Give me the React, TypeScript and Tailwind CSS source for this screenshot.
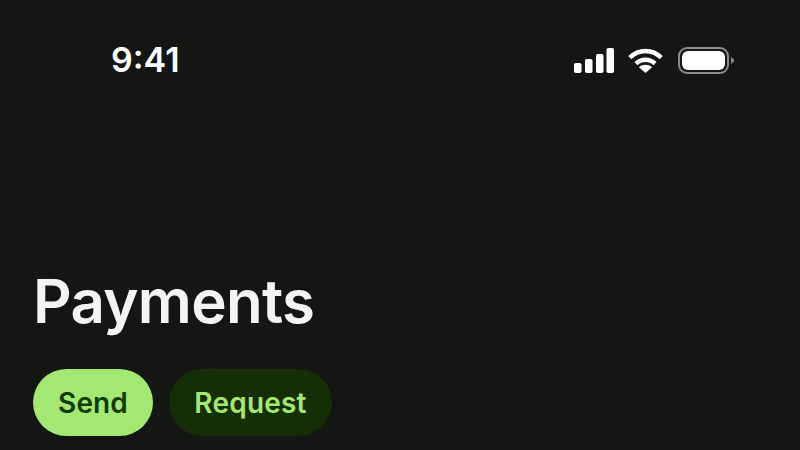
const inter = { fontFamily: "Inter, 'Noto Sans', sans-serif" };

function StatusIcons() {
  return (
    <div className="flex items-center">
      <svg width="40" height="25" viewBox="0 0 40 25" fill="#fff">
        <rect x="0" y="15" width="7.5" height="10" rx="1.8" />
        <rect x="11" y="11" width="7.5" height="14" rx="1.8" />
        <rect x="22" y="6" width="7.5" height="19" rx="1.8" />
        <rect x="32.5" y="0" width="7.5" height="25" rx="1.8" />
      </svg>
      <svg className="ml-[14px]" width="35" height="25" viewBox="0 0 35 25" fill="none" stroke="#fff" strokeWidth="4.4">
        <path d="M1.8 9.6C10.5 .7 24.5 .7 33.2 9.6" />
        <path d="M8 15.6C13.3 10.4 21.7 10.4 27 15.6" />
        <path d="M17.5 25L10.9 19.2C14.7 16 20.3 16 24.1 19.2Z" fill="#fff" stroke="none" />
      </svg>
      <div className="ml-[15px] flex h-[27px] w-[51px] items-center justify-center rounded-[9px] border-2 border-[#8b8c8a]">
        <div className="h-[19px] w-[43px] rounded-[6px] bg-white" />
      </div>
      <svg className="ml-[2px]" width="3" height="7" viewBox="0 0 3 7" fill="#8b8c8a">
        <path d="M0 0L3 2.5V4.5L0 7Z" />
      </svg>
    </div>
  );
}

export default function App() {
  return (
    <div className="flex h-[450px] w-[800px] flex-col overflow-hidden bg-[#141614]" style={inter}>
      <div className="mt-[39px] flex h-[42px] items-center justify-between pl-[111px] pr-[66px]">
        <span className="text-[34px] font-semibold leading-none text-white">9:41</span>
        <StatusIcons />
      </div>
      <h1 className="ml-[33px] mt-[184px] text-[60px] font-semibold leading-[72px] tracking-[-0.7px] text-[#f4f5f3]">
        Payments
      </h1>
      <div className="ml-[33px] mt-[32px] flex gap-[16px]">
        <button className="flex h-[67px] w-[120px] items-center justify-center rounded-full bg-[#a3e873] pt-[1px] text-[28px] font-semibold tracking-[0.1px] text-[#123a08]">
          Send
        </button>
        <button className="flex h-[67px] w-[163px] items-center justify-center rounded-full bg-[#162e06] pt-[1px] text-[28px] font-semibold tracking-[0.2px] text-[#a3e873]">
          Request
        </button>
      </div>
    </div>
  );
}
